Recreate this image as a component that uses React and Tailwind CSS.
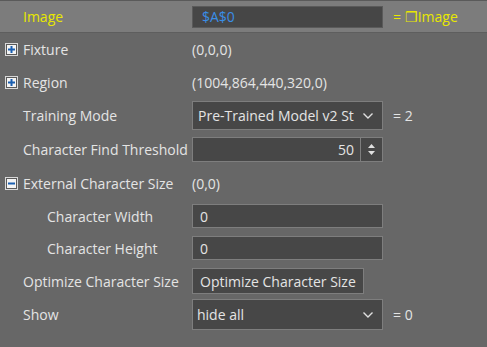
import React from "react";

function Box({ minus }) {
  return (
    <svg width="13" height="13" viewBox="0 0 13 13" className="shrink-0">
      <rect x="0.5" y="0.5" width="12" height="12" fill="#5a5a5a" stroke="#d8d8d8" />
      <rect x="2" y="2" width="9" height="9" fill="#f4f4f4" />
      <rect x="3" y="5.5" width="7" height="2" fill="#1a5fb0" />
      {!minus && <rect x="5.5" y="3" width="2" height="7" fill="#1a5fb0" />}
    </svg>
  );
}

function Chevron() {
  return (
    <svg width="12" height="8" viewBox="0 0 12 8" className="shrink-0">
      <path d="M1.5 1.5 L6 6 L10.5 1.5" fill="none" stroke="#e0e0e0" strokeWidth="1.4" />
    </svg>
  );
}

const label = "text-[#e4e4e4]";

function Row({ h, icon, indent, name, children, extra }) {
  return (
    <div className="flex items-center" style={{ height: h }}>
      <div className="flex items-center w-[192px] shrink-0">
        {icon ? (
          <div className="pl-[5px] flex items-center gap-[5px]">
            {icon}
            <span className={label}>{name}</span>
          </div>
        ) : (
          <span className={`${label} ${indent ? "pl-[47px]" : "pl-[23px]"} whitespace-nowrap`}>{name}</span>
        )}
      </div>
      {children}
      {extra}
    </div>
  );
}

export default function App() {
  return (
    <div
      className="w-[487px] h-[347px] bg-[#676767] text-[14px] overflow-hidden"
      style={{ fontFamily: '"Open Sans", "Noto Sans", sans-serif' }}
    >
      <div className="h-[33px] bg-[#7c7c7c] border-t border-[#5a5a5a] border-b border-b-[#5e5e5e] flex items-center">
        <span className="pl-[23px] w-[192px] text-[#e8e800]">Image</span>
        <div className="w-[191px] h-[22px] bg-[#464646] border border-[#5a5a5a] flex items-center pl-[9px] text-[#3a8ee6]">
          $A$0
        </div>
        <span className="pl-[10px] text-[#e8e800]">= ❒Image</span>
      </div>
      <Row h={33} icon={<Box />} name="Fixture">
        <span className={label}>(0,0,0)</span>
      </Row>
      <Row h={33} icon={<Box />} name="Region">
        <span className={label}>(1004,864,440,320,0)</span>
      </Row>
      <Row
        h={33}
        name="Training Mode"
        extra={<span className={`${label} pl-[10px]`}>= 2</span>}
      >
        <div className="w-[191px] h-[29px] bg-[#474747] border border-[#7e7e7e] flex items-center pl-[5px] pr-[8px] gap-1">
          <span className={`${label} flex-1 overflow-hidden whitespace-nowrap`}>Pre-Trained Model v2 St</span>
          <Chevron />
        </div>
      </Row>
      <Row h={35} name="Character Find Threshold">
        <div className="w-[191px] h-[25px] bg-[#474747] border border-[#7e7e7e] flex items-center">
          <span className={`${label} flex-1 text-right pr-[6px]`}>50</span>
          <div className="w-[22px] h-full border-l border-[#7e7e7e] flex flex-col items-center justify-center gap-[3px]">
            <svg width="7" height="4" viewBox="0 0 7 4"><path d="M0 4 L3.5 0 L7 4 Z" fill="#e0e0e0" /></svg>
            <svg width="7" height="4" viewBox="0 0 7 4"><path d="M0 0 L3.5 4 L7 0 Z" fill="#e0e0e0" /></svg>
          </div>
        </div>
      </Row>
      <Row h={33} icon={<Box minus />} name="External Character Size">
        <span className={label}>(0,0)</span>
      </Row>
      <Row h={32} indent name="Character Width">
        <div className="w-[191px] h-[24px] bg-[#474747] border border-[#7e7e7e] flex items-center pl-[7px]">
          <span className={label}>0</span>
        </div>
      </Row>
      <Row h={32} indent name="Character Height">
        <div className="w-[191px] h-[24px] bg-[#474747] border border-[#7e7e7e] flex items-center pl-[7px]">
          <span className={label}>0</span>
        </div>
      </Row>
      <Row h={34} name="Optimize Character Size">
        <div className="h-[26px] bg-[#474747] border border-[#7e7e7e] flex items-center px-[7px]">
          <span className={`${label} whitespace-nowrap`}>Optimize Character Size</span>
        </div>
      </Row>
      <Row
        h={33}
        name="Show"
        extra={<span className={`${label} pl-[10px]`}>= 0</span>}
      >
        <div className="w-[191px] h-[31px] bg-[#474747] border border-[#7e7e7e] flex items-center pl-[4px] pr-[8px]">
          <span className={`${label} flex-1`}>hide all</span>
          <Chevron />
        </div>
      </Row>
    </div>
  );
}
